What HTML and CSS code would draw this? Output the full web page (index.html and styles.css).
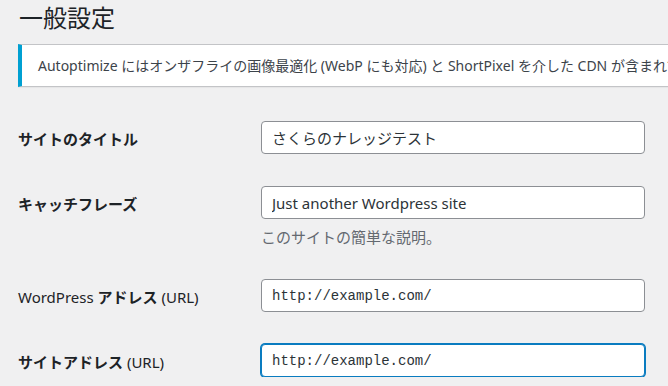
FILE: index.html
```html
<!DOCTYPE html>
<html lang="ja">

<head>
    <meta charset="UTF-8">
    <meta name="viewport" content="width=device-width, initial-scale=1.0">
    <title>一般設定</title>

    <link rel="stylesheet" href="styles.css">

</head>

<body>
    <div class="wrap">
        <h1 class="page_title">一般設定</h1>

        <!-- plugin notice -->
        <div class="notice notice_info">
            <p>Autoptimize にはオンザフライの画像最適化 (WebP にも対応) と ShortPixel を介した CDN が含まれています。</p>
        </div>

        <div class="settings_form">
            <div class="field_row">
                <label class="field_label" for="blogname">サイトのタイトル</label>
                <div class="field_control">
                    <input class="text_input" type="text" id="blogname" value="さくらのナレッジテスト">
                </div>
            </div>

            <div class="field_row">
                <label class="field_label" for="blogdescription">キャッチフレーズ</label>
                <div class="field_control">
                    <input class="text_input" type="text" id="blogdescription" value="Just another Wordpress site">
                    <p class="description">このサイトの簡単な説明。</p>
                </div>
            </div>

            <div class="field_row">
                <label class="field_label" for="siteurl"><span class="latin">WordPress</span> アドレス <span class="latin">(URL)</span></label>
                <div class="field_control">
                    <input class="text_input code" type="url" id="siteurl" value="http://example.com/">
                </div>
            </div>

            <div class="field_row">
                <label class="field_label" for="home">サイトアドレス <span class="latin">(URL)</span></label>
                <div class="field_control">
                    <input class="text_input code is_focused" type="url" id="home" value="http://example.com/">
                </div>
            </div>
        </div>
    </div>
</body>

</html>
```

FILE: styles.css
```css
html,
body {
    margin: 0;
    padding: 0;
    background-color: #f0f0f1;
    color: #1d2327;
    font-family: "Noto Sans", "Noto Sans CJK JP", sans-serif;
    overflow: hidden;
}

*,
*::before,
*::after {
    box-sizing: border-box;
}

.wrap {
    width: 1000px;
    padding: 2px 0 0 18px;
}

.page_title {
    margin: 0;
    padding-left: 1px;
    font-size: 24px;
    font-weight: 400;
    line-height: 32px;
    color: #1d2327;
}

/* notice */

.notice {
    margin-top: 10px;
    background: #fff;
    border: 1px solid #c3c4c7;
    border-left-width: 4px;
    box-shadow: 0 1px 1px rgba(0, 0, 0, 0.04);
    padding: 11px 16px;
}

.notice_info {
    border-left-color: #00a0d2;
}

.notice p {
    margin: 0;
    font-size: 14px;
    line-height: 19px;
    white-space: nowrap;
    color: #3c434a;
}

/* form */

.settings_form {
    margin-top: 34px;
    display: flex;
    flex-direction: column;
    gap: 32px;
}

.field_row {
    display: grid;
    grid-template-columns: 243px 384px;
    align-items: start;
}

.field_label {
    padding-top: 8px;
    font-size: 15px;
    line-height: 20px;
    font-weight: 700;
    color: #1d2327;
}

.field_label .latin {
    font-weight: 400;
}

.text_input {
    display: block;
    width: 100%;
    height: 33px;
    margin: 0;
    padding: 0 10px;
    border: 1px solid #8c8f94;
    border-radius: 4px;
    background: #fff;
    color: #2c3338;
    font-family: "Noto Sans", "Noto Sans CJK JP", sans-serif;
    font-size: 15px;
    outline: none;
}

.text_input.code {
    font-family: "Liberation Mono", "DejaVu Sans Mono", monospace;
    font-size: 14px;
}

.text_input.is_focused {
    border-color: #0a7cc0;
    box-shadow: 0 0 0 1px #0a7cc0;
}

.description {
    margin: 8px 0 0;
    font-size: 15px;
    line-height: 20px;
    color: #646970;
}
```
